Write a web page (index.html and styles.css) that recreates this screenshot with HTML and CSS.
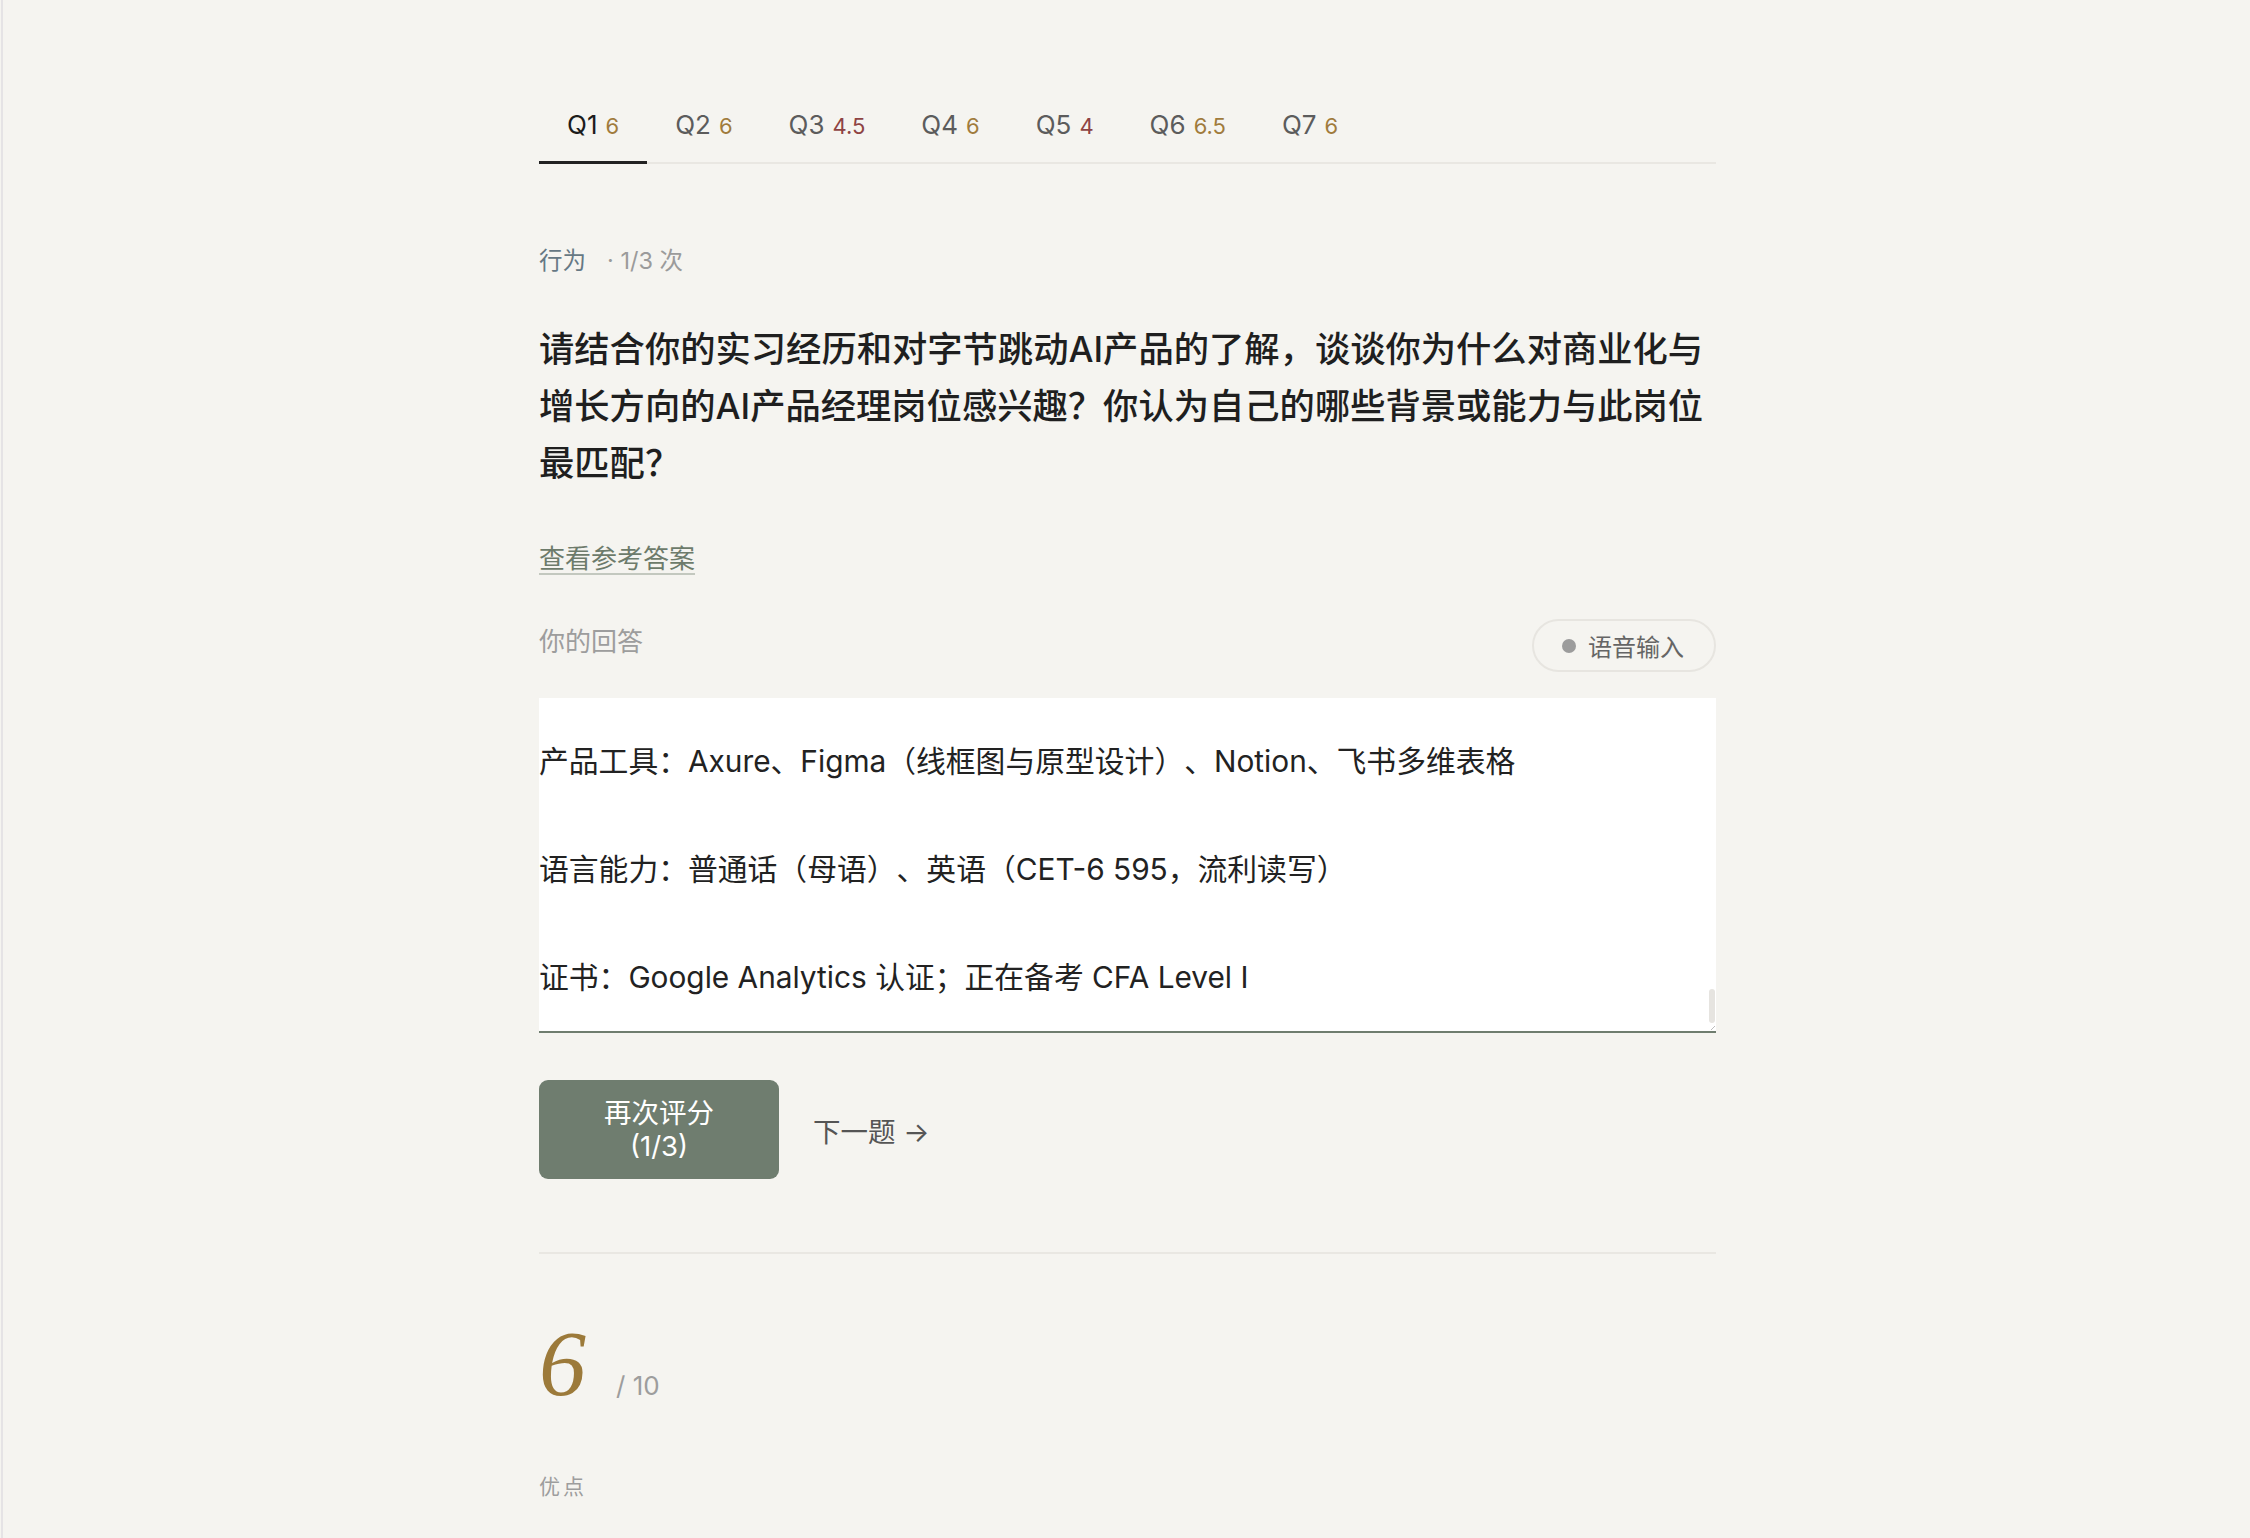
FILE: index.html
```html
<!DOCTYPE html>
<html lang="zh-CN">
<head>
<meta charset="utf-8">
<title>面试练习</title>
<link rel="stylesheet" href="styles.css">
</head>
<body>
<div class="app">
  <main class="page">
    <nav class="tabs">
      <a class="tab active">Q1<span class="sc gold">6</span></a>
      <a class="tab">Q2<span class="sc gold">6</span></a>
      <a class="tab">Q3<span class="sc red">4.5</span></a>
      <a class="tab">Q4<span class="sc gold">6</span></a>
      <a class="tab">Q5<span class="sc red">4</span></a>
      <a class="tab">Q6<span class="sc gold">6.5</span></a>
      <a class="tab">Q7<span class="sc gold">6</span></a>
    </nav>

    <div class="meta"><span class="cat">行为</span><span class="count">· 1/3 次</span></div>

    <h1 class="question">请结合你的实习经历和对字节跳动AI产品的了解，谈谈你为什么对商业化与增长方向的AI产品经理岗位感兴趣？你认为自己的哪些背景或能力与此岗位最匹配？</h1>

    <a class="ref-link">查看参考答案</a>

    <div class="answer-head">
      <span class="label">你的回答</span>
      <button class="voice"><span class="dot"></span>语音输入</button>
    </div>

    <div class="answer-box">
      <div class="answer-text">产品工具：Axure、Figma（线框图与原型设计）、Notion、飞书多维表格

语言能力：普通话（母语）、英语（CET-6 595，流利读写）

证书：Google Analytics 认证；正在备考 CFA Level I</div>
      <span class="thumb"></span>
      <span class="grip"></span>
    </div>

    <div class="actions">
      <button class="primary">再次评分<br>(1/3)</button>
      <button class="next">下一题 →</button>
    </div>

    <hr class="divider">

    <div class="score"><span class="big">6</span><span class="out">/ 10</span></div>

    <div class="section-label">优点</div>
  </main>
</div>
</body>
</html>
```

FILE: styles.css
```css
html, body {
  margin: 0;
  padding: 0;
  background: #f5f4f0;
}

body {
  font-family: "Inter", "Noto Sans CJK SC", sans-serif;
  color: #222;
  text-spacing-trim: space-all;
}

.app {
  min-height: 100vh;
  margin-left: 1px;
  padding-left: 2px;
  border-left: 2px solid #e5e3e5;
}

.page {
  width: 1177px;
  margin: 0 auto;
  padding: 90px 0 60px;
}

/* tabs */
.tabs {
  display: flex;
  border-bottom: 2px solid #e9e7e2;
}

.tab {
  display: flex;
  align-items: baseline;
  padding: 17px 28px 17px 28px;
  line-height: 36px;
  font-size: 26px;
  color: #5c5c5c;
  border-bottom: 3px solid transparent;
  margin-bottom: -2px;
  cursor: pointer;
}

.tab.active {
  color: #1c1c1c;
  border-bottom-color: #222;
}

.sc {
  margin-left: 8px;
  font-size: 22px;
}

.gold { color: #a07b3c; }
.red { color: #8e4343; }

/* meta */
.meta {
  margin-top: 82px;
  line-height: 30px;
  font-size: 23.5px;
}

.cat {
  color: #667884;
}

.count {
  margin-left: 21px;
  color: #9b9b9b;
}

.question {
  margin: 45px 0 0;
  font-size: 35.3px;
  line-height: 57px;
  font-weight: 500;
  color: #1f1f1f;
}

.ref-link {
  display: inline-block;
  margin-top: 49px;
  font-size: 26px;
  line-height: 36px;
  color: #6d7b6b;
  text-decoration: underline;
  text-decoration-color: #c3c8bf;
  text-decoration-thickness: 2px;
  text-underline-offset: 5px;
  cursor: pointer;
}

.answer-head {
  display: flex;
  justify-content: space-between;
  align-items: flex-start;
  margin-top: 42px;
}

.label {
  font-size: 26px;
  line-height: 46px;
  color: #9d9d9d;
}

.voice {
  display: flex;
  align-items: center;
  gap: 12px;
  height: 53px;
  padding: 0 30px 0 28px;
  border: 2px solid #e7e5e0;
  border-radius: 999px;
  background: transparent;
  font-family: inherit;
  font-size: 24px;
  color: #656565;
}

.dot {
  width: 14px;
  height: 14px;
  border-radius: 50%;
  background: #9c9c9c;
}

.answer-box {
  position: relative;
  margin-top: 26px;
  height: 333px;
  background: #fff;
  border-bottom: 2px solid #6f7d6f;
  overflow: hidden;
}

.answer-text {
  padding-top: 36px;
  white-space: pre-wrap;
  font-size: 29.8px;
  line-height: 54px;
  color: #222;
}

.thumb {
  position: absolute;
  right: 1px;
  bottom: 8px;
  width: 6px;
  height: 34px;
  border-radius: 3px;
  background: #e6e4e0;
}

.grip {
  position: absolute;
  right: 1px;
  bottom: 1px;
  width: 4px;
  height: 4px;
  background: linear-gradient(135deg, transparent 45%, #bdbdbd 45%, #bdbdbd 60%, transparent 60%);
}

.actions {
  display: flex;
  align-items: center;
  gap: 34px;
  margin-top: 47px;
}

.primary {
  width: 240px;
  height: 99px;
  border: none;
  border-radius: 9px;
  background: #6f7d6f;
  color: #fff;
  font-family: inherit;
  font-size: 27.5px;
  line-height: 33px;
  cursor: pointer;
}

.next {
  border: none;
  background: transparent;
  padding: 0;
  font-family: inherit;
  font-size: 27.5px;
  color: #555;
  cursor: pointer;
}

.divider {
  margin: 73px 0 0;
  border: none;
  height: 2px;
  background: #e9e7e2;
}

.score {
  display: flex;
  align-items: baseline;
  gap: 30px;
  margin-top: 61px;
}

.big {
  font-family: "Liberation Serif", serif;
  font-style: italic;
  font-size: 94px;
  line-height: 96px;
  color: #9c7a3a;
}

.out {
  font-size: 26px;
  color: #9d9d9d;
}

.section-label {
  margin-top: 61px;
  font-size: 21px;
  line-height: 30px;
  letter-spacing: 3px;
  color: #9d9d9d;
}
```
